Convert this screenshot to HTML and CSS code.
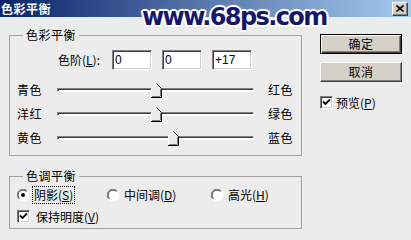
FILE: index.html
```html
<!DOCTYPE html>
<html lang="zh-CN">
<head>
<meta charset="utf-8">
<title>色彩平衡</title>
<link rel="stylesheet" href="styles.css">
</head>
<body>
<div class="window">
  <div class="titlebar">
    <span class="title">色彩平衡</span>
    <span class="close"><svg width="8" height="7" viewBox="0 0 8 7"><path d="M0.5 0.5 L7.5 6.5 M7.5 0.5 L0.5 6.5" stroke="#000" stroke-width="1.6" fill="none"/></svg></span>
  </div>
  <div class="watermark">www.68ps.com</div>
  <div class="main">
    <div class="left">
      <fieldset class="group g1">
        <legend>色彩平衡</legend>
        <div class="levels">
          <span class="lbl">色阶(<u>L</u>):</span>
          <span class="field">0</span>
          <span class="field">0</span>
          <span class="field">+17</span>
        </div>
        <div class="slider-row">
          <span class="sl-left">青色</span>
          <div class="track"><span class="thumb" style="left:93px"><svg width="11" height="15" viewBox="0 0 11 15"><polygon points="0.5,14.5 0.5,5.5 5.5,0.5 10.5,5.5 10.5,14.5" fill="#ececec"/><polyline points="0.5,14 0.5,5.5 5.5,0.5" fill="none" stroke="#fff"/><polyline points="5.5,0.5 10.5,5.5 10.5,14.5 0,14.5" fill="none" stroke="#000"/><polyline points="9.5,6 9.5,13.5 1,13.5" fill="none" stroke="#808080"/></svg></span></div>
          <span class="sl-right">红色</span>
        </div>
        <div class="slider-row">
          <span class="sl-left">洋红</span>
          <div class="track"><span class="thumb" style="left:93px"><svg width="11" height="15" viewBox="0 0 11 15"><polygon points="0.5,14.5 0.5,5.5 5.5,0.5 10.5,5.5 10.5,14.5" fill="#ececec"/><polyline points="0.5,14 0.5,5.5 5.5,0.5" fill="none" stroke="#fff"/><polyline points="5.5,0.5 10.5,5.5 10.5,14.5 0,14.5" fill="none" stroke="#000"/><polyline points="9.5,6 9.5,13.5 1,13.5" fill="none" stroke="#808080"/></svg></span></div>
          <span class="sl-right">绿色</span>
        </div>
        <div class="slider-row">
          <span class="sl-left">黄色</span>
          <div class="track"><span class="thumb" style="left:110px"><svg width="11" height="15" viewBox="0 0 11 15"><polygon points="0.5,14.5 0.5,5.5 5.5,0.5 10.5,5.5 10.5,14.5" fill="#ececec"/><polyline points="0.5,14 0.5,5.5 5.5,0.5" fill="none" stroke="#fff"/><polyline points="5.5,0.5 10.5,5.5 10.5,14.5 0,14.5" fill="none" stroke="#000"/><polyline points="9.5,6 9.5,13.5 1,13.5" fill="none" stroke="#808080"/></svg></span></div>
          <span class="sl-right">蓝色</span>
        </div>
      </fieldset>
      <fieldset class="group g2">
        <legend>色调平衡</legend>
        <div class="radios">
          <span class="radio r1">
            <svg class="rbox" width="12" height="12" viewBox="0 0 12 12"><circle cx="6" cy="6" r="5.5" fill="#fff"/><path d="M1.8 10.2 A5.5 5.5 0 0 1 10.2 1.8" stroke="#808080" fill="none"/><path d="M10.2 1.8 A5.5 5.5 0 0 1 1.8 10.2" stroke="#fff" fill="none"/><path d="M2.5 9.5 A4.5 4.5 0 0 1 9.5 2.5" stroke="#404040" fill="none"/><circle cx="6" cy="6" r="2" fill="#000"/></svg>
            <span class="rtext focus">阴影(<u>S</u>)</span>
          </span>
          <span class="radio r2">
            <svg class="rbox" width="12" height="12" viewBox="0 0 12 12"><circle cx="6" cy="6" r="5.5" fill="#fff"/><path d="M1.8 10.2 A5.5 5.5 0 0 1 10.2 1.8" stroke="#808080" fill="none"/><path d="M10.2 1.8 A5.5 5.5 0 0 1 1.8 10.2" stroke="#fff" fill="none"/><path d="M2.5 9.5 A4.5 4.5 0 0 1 9.5 2.5" stroke="#404040" fill="none"/></svg>
            <span class="rtext">中间调(<u>D</u>)</span>
          </span>
          <span class="radio r3">
            <svg class="rbox" width="12" height="12" viewBox="0 0 12 12"><circle cx="6" cy="6" r="5.5" fill="#fff"/><path d="M1.8 10.2 A5.5 5.5 0 0 1 10.2 1.8" stroke="#808080" fill="none"/><path d="M10.2 1.8 A5.5 5.5 0 0 1 1.8 10.2" stroke="#fff" fill="none"/><path d="M2.5 9.5 A4.5 4.5 0 0 1 9.5 2.5" stroke="#404040" fill="none"/></svg>
            <span class="rtext">高光(<u>H</u>)</span>
          </span>
        </div>
        <div class="check-row">
          <span class="cbox"><svg width="9" height="9" viewBox="0 0 9 9"><path d="M1 3.5 L3.5 6 L8 1.5" stroke="#000" stroke-width="1.8" fill="none"/></svg></span>
          <span class="ctext">保持明度(<u>V</u>)</span>
        </div>
      </fieldset>
    </div>
    <div class="right">
      <button class="btn default">确定</button>
      <button class="btn">取消</button>
      <div class="check-row preview">
        <span class="cbox"><svg width="9" height="9" viewBox="0 0 9 9"><path d="M1 3.5 L3.5 6 L8 1.5" stroke="#000" stroke-width="1.8" fill="none"/></svg></span>
        <span class="ctext">预览(<u>P</u>)</span>
      </div>
    </div>
  </div>
</div>
</body>
</html>
```
FILE: styles.css
```css
* { box-sizing: border-box; }
html, body { margin: 0; padding: 0; }
body {
  width: 411px;
  height: 240px;
  overflow: hidden;
  background: #ececec;
  font-family: "Noto Sans CJK SC", "Liberation Sans", sans-serif;
  font-size: 12px;
  color: #000;
}
.window { position: relative; width: 411px; height: 240px; }

.titlebar {
  height: 17px;
  display: flex;
  align-items: center;
  justify-content: space-between;
  padding: 0 3px 0 1px;
  background: linear-gradient(to right, #0a246a, #a6caf0);
}
.title { color: #fff; font-weight: bold; font-size: 12px; line-height: 14px; letter-spacing: 0.5px; }
.close {
  width: 16px;
  height: 14px;
  background: #d4d0c8;
  border: 1px solid;
  border-color: #fff #404040 #404040 #fff;
  box-shadow: inset -1px -1px #808080;
  display: flex;
  align-items: center;
  justify-content: center;
}

.watermark {
  position: absolute;
  left: 142px;
  top: 3px;
  font-family: "DejaVu Sans", sans-serif;
  font-weight: bold;
  font-size: 24px;
  line-height: 28px;
  letter-spacing: -1.6px;
  color: #16166a;
  text-shadow:
    2px 0 0 #fff, -2px 0 0 #fff, 0 2px 0 #fff, 0 -2px 0 #fff,
    1.5px 1.5px 0 #fff, -1.5px 1.5px 0 #fff, 1.5px -1.5px 0 #fff, -1.5px -1.5px 0 #fff,
    0 0 4px #c8c080, 0 0 2px #c8c080;
}

.main { display: flex; gap: 18px; padding: 11px 0 0 9px; }
.left { width: 293px; display: flex; flex-direction: column; }

.group {
  margin: 0;
  padding: 0 0 5px 0;
  border: 1px solid #a0a0a0;
  min-width: 0;
}
.group legend {
  margin-left: 13px;
  padding: 0 3px;
  font-size: 12px;
  line-height: 14px;
  letter-spacing: 0.5px;
}

.levels {
  display: flex;
  align-items: center;
  height: 20px;
  margin-top: 8px;
  padding-left: 48px;
}
.lbl { width: 54px; line-height: 14px; }
.field {
  width: 40px;
  height: 20px;
  margin-right: 10px;
  background: #fff;
  border: 1px solid;
  border-color: #808080 #fff #fff #808080;
  box-shadow: inset 1px 1px #404040, inset -1px -1px #d4d0c8;
  padding: 2px 0 0 2px;
  font-family: "Liberation Sans", sans-serif;
  font-size: 12px;
  line-height: 15px;
}

.slider-row { display: flex; align-items: center; height: 24px; padding-left: 7px; }
.levels + .slider-row { margin-top: 8px; }
.sl-left { width: 40px; line-height: 14px; letter-spacing: 0.5px; }
.sl-right { line-height: 14px; letter-spacing: 0.5px; }
.track {
  position: relative;
  width: 197px;
  height: 4px;
  margin-right: 14px;
  background: #fff;
  border: 1px solid;
  border-color: #808080 #fff #fff #808080;
  box-shadow: inset 1px 1px #404040;
}
.thumb { position: absolute; top: -6px; width: 11px; height: 15px; display: block; }
.thumb svg { display: block; }

.g2 { margin-top: 13px; padding-bottom: 4px; }
.radios {
  display: flex;
  align-items: center;
  height: 17px;
  margin-top: 3px;
  padding-left: 7px;
}
.radio { display: flex; align-items: center; gap: 3px; line-height: 14px; }
.r1 { width: 90px; }
.r2 { width: 104px; }
.rbox { display: block; flex: none; }
.rtext { border: 1px dotted transparent; padding: 1px 1px; }
.rtext.focus { border-color: #000; }

.check-row {
  display: flex;
  align-items: center;
  gap: 6px;
  height: 15px;
  margin-top: 6px;
  padding-left: 7px;
}
.cbox {
  width: 13px;
  height: 13px;
  flex: none;
  background: #fff;
  border: 1px solid;
  border-color: #808080 #fff #fff #808080;
  box-shadow: inset 1px 1px #404040, inset -1px -1px #d4d0c8;
  display: flex;
  align-items: center;
  justify-content: center;
}
.cbox svg { display: block; }
.ctext { line-height: 14px; }

.right { width: 82px; display: flex; flex-direction: column; padding-top: 6px; }
.btn {
  width: 82px;
  height: 20px;
  margin: 0;
  padding: 0;
  background: #d4d0c8;
  border: 1px solid;
  border-color: #fff #404040 #404040 #fff;
  box-shadow: inset -1px -1px #808080;
  font-family: "Noto Sans CJK SC", sans-serif;
  font-size: 12px;
  line-height: 14px;
  letter-spacing: 0.5px;
  color: #000;
}
.btn + .btn { margin-top: 8px; }
.btn.default {
  border: 1px solid #000;
  box-shadow: inset 1px 1px #fff, inset -1px -1px #404040, inset -2px -2px #808080;
}
.check-row.preview { margin-top: 13px; padding-left: 0; gap: 3px; }
```
